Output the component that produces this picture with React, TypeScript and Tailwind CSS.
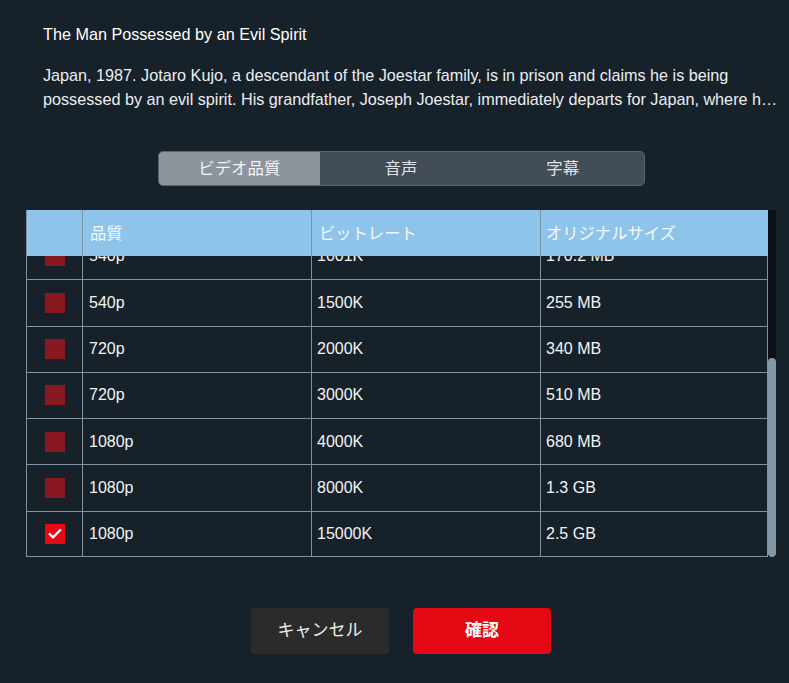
import { Check } from "lucide-react";

const tabs = ["ビデオ品質", "音声", "字幕"];

interface QualityRow {
  readonly quality: string;
  readonly bitrate: string;
  readonly size: string;
  readonly checked?: boolean;
}

const rows: ReadonlyArray<QualityRow> = [
  { quality: "540p", bitrate: "1001K", size: "170.2 MB" },
  { quality: "540p", bitrate: "1500K", size: "255 MB" },
  { quality: "720p", bitrate: "2000K", size: "340 MB" },
  { quality: "720p", bitrate: "3000K", size: "510 MB" },
  { quality: "1080p", bitrate: "4000K", size: "680 MB" },
  { quality: "1080p", bitrate: "8000K", size: "1.3 GB" },
  { quality: "1080p", bitrate: "15000K", size: "2.5 GB", checked: true },
];

const font = "font-['Liberation_Sans','Noto_Sans_CJK_JP',sans-serif]";

export default function App() {
  return (
    <div className={`${font} flex h-[683px] w-[789px] flex-col overflow-hidden bg-[#17212a] pl-[26px] pt-[22px] text-white`}>
      <div className="flex w-[750px] flex-col">
        <div className="px-[17px]">
          <h1 className="text-[16.2px] leading-6 text-white">The Man Possessed by an Evil Spirit</h1>
          <p className="mt-[17px] line-clamp-2 w-[737px] text-[16.2px] leading-6 text-[#eceef0]">
            Japan, 1987. Jotaro Kujo, a descendant of the Joestar family, is in prison and claims he is being
            possessed by an evil spirit. His grandfather, Joseph Joestar, immediately departs for Japan, where he
            meets with Jotaro and learns the truth.
          </p>
        </div>

        <div className="mt-10 flex justify-center">
          <div className="grid h-[35px] w-[487px] grid-cols-3 overflow-hidden rounded-[5px] border border-[#5a646e] bg-[#434d57]">
            {tabs.map((tab, index) => (
              <div
                key={tab}
                className={
                  index === 0
                    ? "flex items-center justify-center bg-[#8c949c] text-[16.4px] text-[#f2f3f4]"
                    : "flex items-center justify-center text-[16.4px] text-[#dfe2e5]"
                }
              >
                {tab}
              </div>
            ))}
          </div>
        </div>

        <div className="mt-6 flex h-[347px]">
          <div className="flex w-[742px] flex-col">
            <div className="grid h-[46px] shrink-0 grid-cols-[56px_229px_229px_1fr] bg-[#8ec4e9] text-[16.3px] text-[#f4f9fd]">
              <div className="border-l border-[#7f93a4]" />
              <div className="flex items-center border-l border-[#7f93a4] pl-[7px]">品質</div>
              <div className="flex items-center border-l border-[#7f93a4] pl-[7px]">ビットレート</div>
              <div className="flex items-center border-l border-[#7f93a4] pl-[5px]">オリジナルサイズ</div>
            </div>
            <div className="flex min-h-0 flex-1 flex-col justify-end overflow-hidden">
              {rows.map((row, index) => (
                <div
                  key={index}
                  className="grid h-[46.3px] shrink-0 grid-cols-[56px_229px_229px_1fr] border-t border-[#7f93a4] text-[16px] text-[#f2f4f6] first:border-t-0 last:border-b"
                >
                  <div className="flex items-center justify-center border-l border-[#7f93a4] pl-px">
                    {row.checked ? (
                      <span className="flex h-5 w-5 items-center justify-center bg-[#e50914]">
                        <Check className="h-4 w-4" strokeWidth={3.5} color="#ffffff" />
                      </span>
                    ) : (
                      <span className="h-5 w-5 bg-[#8a1821]" />
                    )}
                  </div>
                  <div className="flex items-center border-l border-[#7f93a4] pl-[6px]">{row.quality}</div>
                  <div className="flex items-center border-l border-[#7f93a4] pl-[5px]">{row.bitrate}</div>
                  <div className="flex items-center border-x border-[#7f93a4] pl-[5px]">{row.size}</div>
                </div>
              ))}
            </div>
          </div>
          <div className="flex w-2 flex-col justify-end bg-[#0b1117]">
            <div className="h-[199px] rounded-full bg-[#8497a7]" />
          </div>
        </div>

        <div className="mt-[51px] flex justify-center gap-6">
          <button className="h-[46px] w-[138px] rounded-[4px] bg-[#2b2b2b] text-[17px] text-[#f0f0f0]" type="button">
            キャンセル
          </button>
          <button className="h-[46px] w-[138px] rounded-[4px] bg-[#e50914] text-[17px] font-bold text-white" type="button">
            確認
          </button>
        </div>
      </div>
    </div>
  );
}
